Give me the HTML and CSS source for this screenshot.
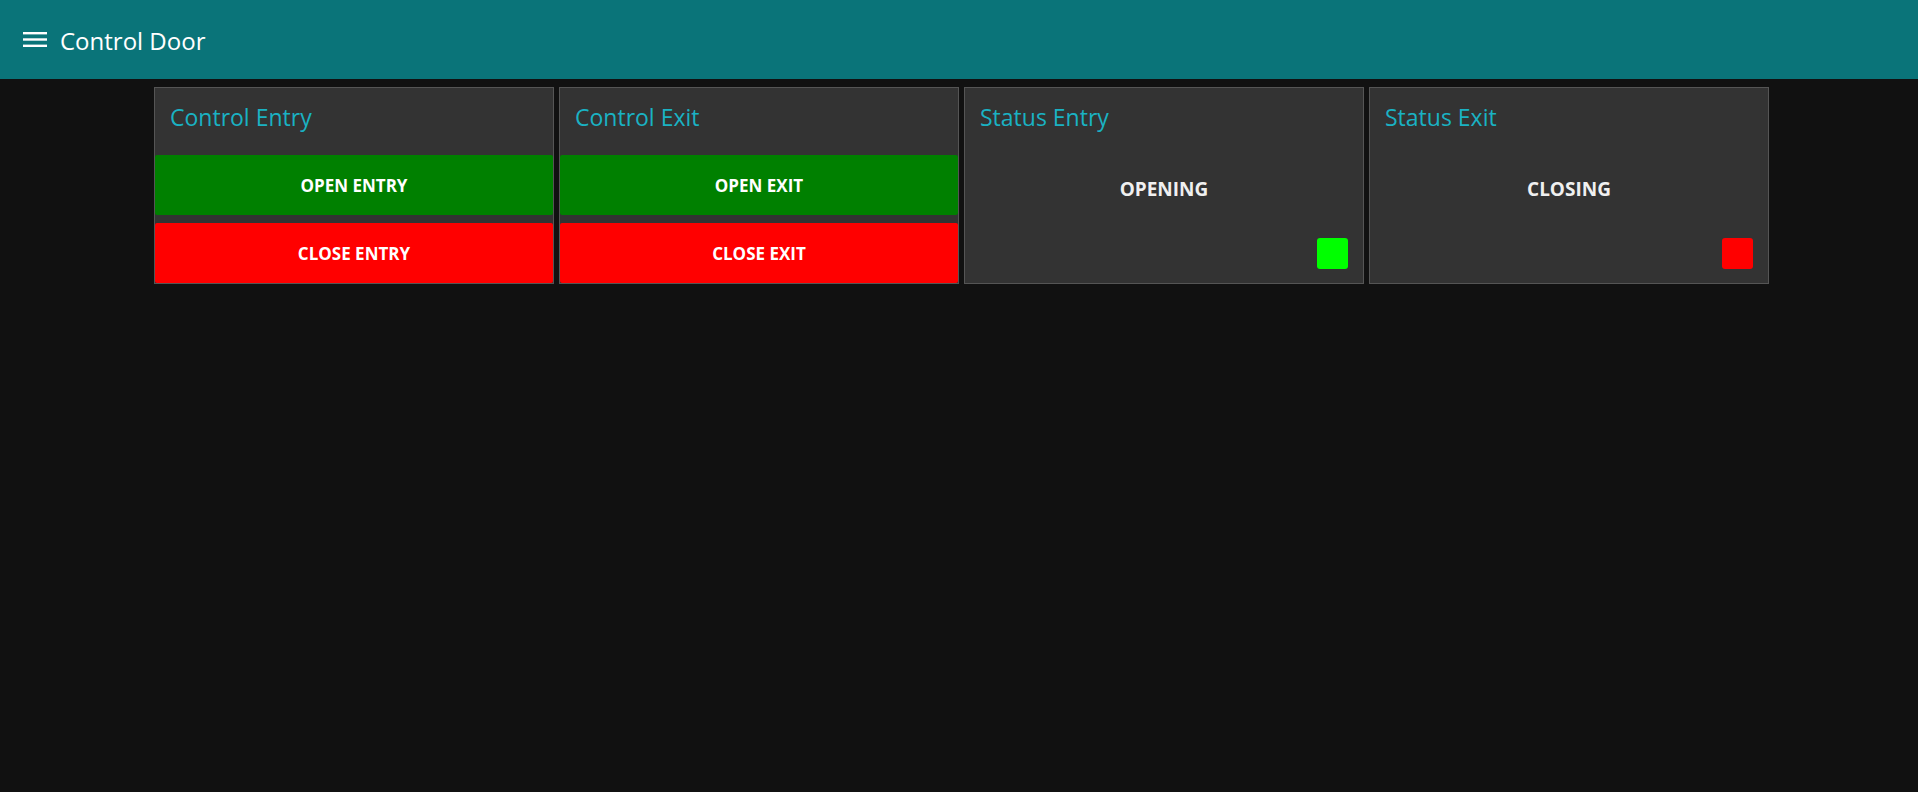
FILE: index.html
```html
<!DOCTYPE html>
<html>
<head>
<meta charset="utf-8">
<link rel="stylesheet" href="styles.css">
</head>
<body>
<header class="toolbar">
  <svg class="menu-icon" width="24" height="16" viewBox="0 0 24 16">
    <rect x="0" y="0" width="24" height="2.4" fill="#fff"/>
    <rect x="0" y="6.3" width="24" height="2.4" fill="#fff"/>
    <rect x="0" y="12.6" width="24" height="2.4" fill="#fff"/>
  </svg>
  <span class="toolbar-title">Control Door</span>
</header>
<main class="groups">
  <section class="card">
    <h2 class="card-title">Control Entry</h2>
    <div class="buttons">
      <button class="btn btn-green">OPEN ENTRY</button>
      <button class="btn btn-red">CLOSE ENTRY</button>
    </div>
  </section>
  <section class="card">
    <h2 class="card-title">Control Exit</h2>
    <div class="buttons">
      <button class="btn btn-green">OPEN EXIT</button>
      <button class="btn btn-red">CLOSE EXIT</button>
    </div>
  </section>
  <section class="card">
    <h2 class="card-title">Status Entry</h2>
    <div class="status">
      <div class="status-text">OPENING</div>
      <div class="status-foot"><span class="led led-green"></span></div>
    </div>
  </section>
  <section class="card">
    <h2 class="card-title">Status Exit</h2>
    <div class="status">
      <div class="status-text">CLOSING</div>
      <div class="status-foot"><span class="led led-red"></span></div>
    </div>
  </section>
</main>
</body>
</html>
```
FILE: styles.css
```css
html, body {
  margin: 0;
  padding: 0;
  background: #111111;
  font-family: "Open Sans", "Noto Sans", sans-serif;
  height: 100%;
}
.toolbar {
  height: 79px;
  background: #0a7479;
  display: flex;
  align-items: center;
  box-sizing: border-box;
  padding-left: 23px;
  color: #fff;
}
.menu-icon {
  display: block;
  margin-top: 1px;
}
.toolbar-title {
  margin-left: 13px;
  margin-top: 2px;
  font-size: 24px;
  line-height: 1;
  color: #fff;
}
.groups {
  display: flex;
  gap: 5px;
  padding: 8px 0 0 154px;
}
.card {
  width: 400px;
  height: 197px;
  box-sizing: border-box;
  background: #333333;
  border: 1px solid #555555;
  display: flex;
  flex-direction: column;
}
.card-title {
  margin: 0;
  height: 67px;
  box-sizing: border-box;
  padding: 17px 0 0 15px;
  font-size: 23px;
  font-weight: 500;
  line-height: 24px;
  color: #1ab2c3;
}
.buttons {
  display: flex;
  flex-direction: column;
  gap: 8px;
}
.btn {
  height: 60px;
  width: 100%;
  border: none;
  border-radius: 2px;
  color: #fff;
  font-family: "Open Sans", "Noto Sans", sans-serif;
  font-weight: 700;
  font-size: 17px;
  padding: 0;
  cursor: pointer;
}
.btn-green { background: #008000; }
.btn-red { background: #ff0000; }
.status {
  flex: 1;
  display: flex;
  flex-direction: column;
}
.status-text {
  text-align: center;
  color: #f0f0f0;
  font-weight: 700;
  font-size: 19px;
  line-height: 20px;
  margin-top: 24px;
}
.status-foot {
  margin-top: auto;
  display: flex;
  justify-content: flex-end;
  padding: 0 15px 14px 0;
}
.led {
  width: 31px;
  height: 31px;
  border-radius: 3px;
  display: block;
}
.led-green { background: #00ff00; }
.led-red { background: #ff0000; }
```
